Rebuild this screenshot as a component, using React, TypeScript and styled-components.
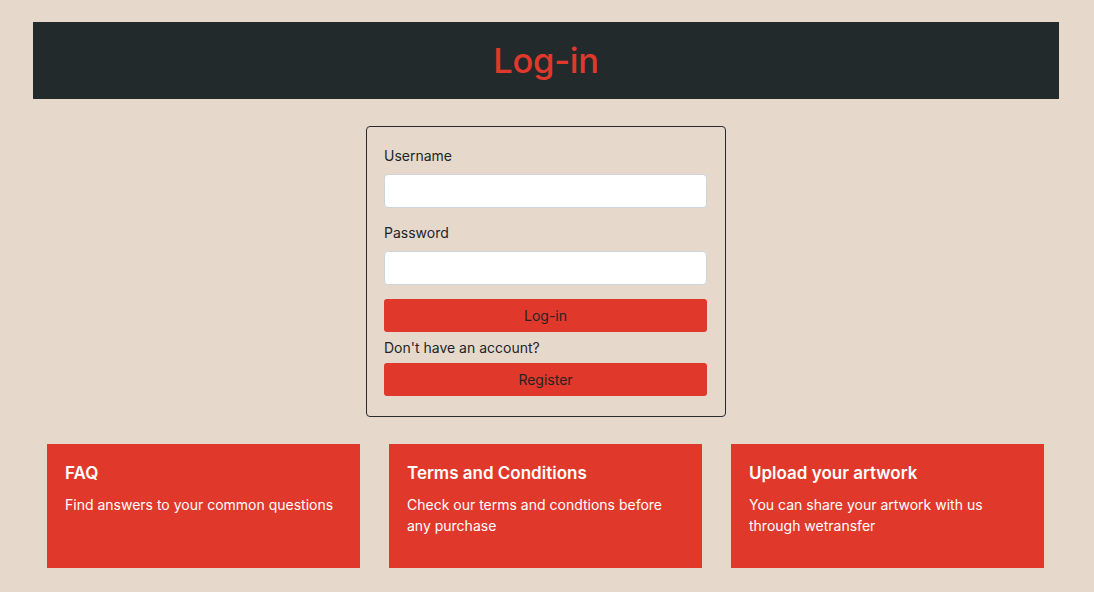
import React from "react";
import styled, { createGlobalStyle } from "styled-components";

const Global = createGlobalStyle`
  html, body { margin: 0; padding: 0; }
  body {
    background: #e6d9cc;
    font-family: Inter, "Noto Sans", "Liberation Sans", sans-serif;
    color: #212529;
  }
  * { box-sizing: border-box; }
`;

const Page = styled.div`
  padding: 22px 35px 24px 33px;
  display: flex;
  flex-direction: column;
  align-items: stretch;
`;

const Header = styled.header`
  height: 77px;
  background: #232a2c;
  display: flex;
  align-items: center;
  justify-content: center;
`;

const Title = styled.h1`
  margin: 0;
  color: #e0392b;
  font-size: 34.5px;
  font-weight: 500;
  letter-spacing: -0.3px;
`;

const FormBox = styled.form`
  align-self: center;
  margin: 27px 0 0 0;
  width: 360px;
  border: 1px solid #2a2a2a;
  border-radius: 4px;
  padding: 19px 18px 20px 17px;
  display: flex;
  flex-direction: column;
`;

const Label = styled.label`
  font-size: 14px;
  line-height: 20px;
  margin-bottom: 8px;
`;

const Input = styled.input`
  height: 34px;
  width: 100%;
  border: 1px solid #ced4da;
  border-radius: 4px;
  background: #fff;
  margin-bottom: ${(p: { $mb: number }) => p.$mb}px;
  font-size: 14px;
`;

const Button = styled.button`
  height: 33px;
  width: 100%;
  border: none;
  border-radius: 3px;
  background: #e0392b;
  color: #2a2222;
  font-family: inherit;
  font-size: 14px;
`;

const Hint = styled.div`
  font-size: 14px;
  line-height: 20px;
  margin: 6px 0 5px;
`;

const Cards = styled.div`
  margin: 27px 15px 0 14px;
  display: grid;
  grid-template-columns: repeat(3, 313px);
  column-gap: 29px;
`;

const Card = styled.div`
  height: 124px;
  background: #e0392b;
  color: #fff;
  padding: 18px 18px;
`;

const CardTitle = styled.h3`
  margin: 0 0 10px;
  font-size: 17px;
  font-weight: 600;
  line-height: 22px;
`;

const CardText = styled.p`
  margin: 0;
  font-size: 14px;
  line-height: 21px;
`;

const cards = [
  { title: "FAQ", text: "Find answers to your common questions" },
  { title: "Terms and Conditions", text: "Check our terms and condtions before any purchase" },
  { title: "Upload your artwork", text: "You can share your artwork with us through wetransfer" },
];

export default function App() {
  return (
    <>
      <Global />
      <Page>
        <Header>
          <Title>Log-in</Title>
        </Header>
        <FormBox onSubmit={(e) => e.preventDefault()}>
          <Label>Username</Label>
          <Input $mb={15} type="text" />
          <Label>Password</Label>
          <Input $mb={14} type="password" />
          <Button type="submit">Log-in</Button>
          <Hint>Don't have an account?</Hint>
          <Button type="button">Register</Button>
        </FormBox>
        <Cards>
          {cards.map((c) => (
            <Card key={c.title}>
              <CardTitle>{c.title}</CardTitle>
              <CardText>{c.text}</CardText>
            </Card>
          ))}
        </Cards>
      </Page>
    </>
  );
}
